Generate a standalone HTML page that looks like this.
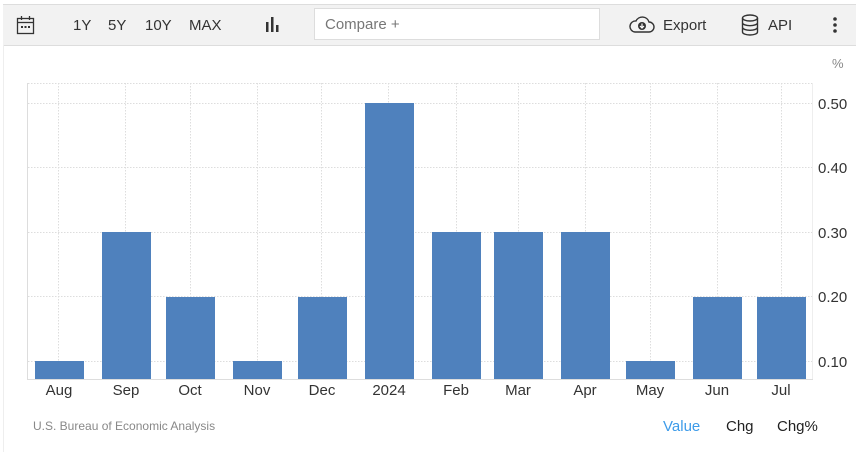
<!DOCTYPE html>
<html><head><style>
body{margin:0;width:856px;height:452px;background:#fff;font-family:"Liberation Sans",Arial,sans-serif;overflow:hidden;position:relative}
.tb{position:absolute;left:3px;top:4px;width:853px;height:40px;background:#f2f2f2;border-top:1px solid #ddd;border-bottom:1px solid #ddd}
.t{position:absolute;font-size:15px;color:#333;top:17px}
.cmp{position:absolute;left:314px;top:8px;width:286px;height:32px;background:#fff;border:1px solid #ddd;box-sizing:border-box;font-size:15px;color:#777;padding:7px 10px}
.lb{position:absolute;left:3px;top:45px;width:1px;height:407px;background:#eee}
</style></head><body>
<div class="tb"></div><div class="lb"></div>
<svg style="position:absolute;left:16px;top:15px" width="20" height="21" viewBox="0 0 20 21"><rect x="1.5" y="3.5" width="16" height="15" fill="none" stroke="#333" stroke-width="1.3"/><line x1="1.5" y1="7.5" x2="17.5" y2="7.5" stroke="#333" stroke-width="1.3"/><line x1="5.5" y1="1" x2="5.5" y2="5" stroke="#333" stroke-width="1.3"/><line x1="13.5" y1="1" x2="13.5" y2="5" stroke="#333" stroke-width="1.3"/><rect x="5" y="11" width="2" height="2" fill="#333"/><rect x="8.5" y="11" width="2" height="2" fill="#333"/><rect x="12" y="11" width="2" height="2" fill="#333"/></svg>
<div class="t" style="left:73px">1Y</div><div class="t" style="left:108px">5Y</div><div class="t" style="left:145px">10Y</div><div class="t" style="left:189px">MAX</div>
<svg style="position:absolute;left:264px;top:16px" width="16" height="16"><rect x="2" y="6" width="2.5" height="10" fill="#333"/><rect x="7" y="1" width="2.5" height="15" fill="#333"/><rect x="12" y="9" width="2.5" height="7" fill="#333"/></svg>
<div class="cmp">Compare +</div>
<svg style="position:absolute;left:629px;top:15px" width="26" height="20" viewBox="0 0 26 20"><path d="M6 17 H20 A5 5 0 0 0 20 7 A7 7 0 0 0 7 6 A5.5 5.5 0 0 0 6 17Z" fill="none" stroke="#333" stroke-width="1.4"/><circle cx="13" cy="11" r="4" fill="#333"/><path d="M13 8.5v4M11 11l2 2 2-2" stroke="#fff" stroke-width="1.2" fill="none"/></svg>
<div class="t" style="left:663px">Export</div>
<svg style="position:absolute;left:741px;top:14px" width="18" height="22" viewBox="0 0 18 22"><ellipse cx="9" cy="4" rx="7.5" ry="3" fill="none" stroke="#333" stroke-width="1.4"/><path d="M1.5 4v14c0 1.7 3.4 3 7.5 3s7.5-1.3 7.5-3V4M1.5 8.7c0 1.7 3.4 3 7.5 3s7.5-1.3 7.5-3M1.5 13.3c0 1.7 3.4 3 7.5 3s7.5-1.3 7.5-3" fill="none" stroke="#333" stroke-width="1.4"/></svg>
<div class="t" style="left:768px">API</div>
<svg style="position:absolute;left:832px;top:16px" width="6" height="18"><circle cx="3" cy="3" r="1.8" fill="#333"/><circle cx="3" cy="9" r="1.8" fill="#333"/><circle cx="3" cy="15" r="1.8" fill="#333"/></svg>
<svg style="position:absolute;left:0;top:0" width="856" height="452" font-family="Liberation Sans, Arial, sans-serif">
<g stroke="#ddd" stroke-dasharray="1.5,1.5" stroke-width="1">
<line x1="28" y1="83.5" x2="813" y2="83.5"/><line x1="28" y1="103.5" x2="813" y2="103.5"/><line x1="28" y1="167.5" x2="813" y2="167.5"/><line x1="28" y1="232.5" x2="813" y2="232.5"/><line x1="28" y1="296.5" x2="813" y2="296.5"/><line x1="28" y1="361.5" x2="813" y2="361.5"/>
<line x1="58.5" y1="83" x2="58.5" y2="379"/><line x1="125.5" y1="83" x2="125.5" y2="379"/><line x1="190.5" y1="83" x2="190.5" y2="379"/><line x1="257.5" y1="83" x2="257.5" y2="379"/><line x1="321.5" y1="83" x2="321.5" y2="379"/><line x1="388.5" y1="83" x2="388.5" y2="379"/><line x1="456.5" y1="83" x2="456.5" y2="379"/><line x1="518.5" y1="83" x2="518.5" y2="379"/><line x1="585.5" y1="83" x2="585.5" y2="379"/><line x1="650.5" y1="83" x2="650.5" y2="379"/><line x1="717.5" y1="83" x2="717.5" y2="379"/><line x1="781.5" y1="83" x2="781.5" y2="379"/>
</g>
<line x1="27.5" y1="83" x2="27.5" y2="379" stroke="#ddd"/>
<line x1="27" y1="379.5" x2="813" y2="379.5" stroke="#ddd"/>
<line x1="812.5" y1="83" x2="812.5" y2="379" stroke="#eee"/>
<g fill="#4f81bd">
<rect x="35" y="361" width="49" height="18"/><rect x="102" y="232" width="49" height="147"/><rect x="166" y="297" width="49" height="82"/><rect x="233" y="361" width="49" height="18"/><rect x="298" y="297" width="49" height="82"/><rect x="365" y="103" width="49" height="276"/><rect x="432" y="232" width="49" height="147"/><rect x="494" y="232" width="49" height="147"/><rect x="561" y="232" width="49" height="147"/><rect x="626" y="361" width="49" height="18"/><rect x="693" y="297" width="49" height="82"/><rect x="757" y="297" width="49" height="82"/>
</g>
<g font-size="15" fill="#333" text-anchor="middle">
<text x="59" y="395">Aug</text><text x="126" y="395">Sep</text><text x="190" y="395">Oct</text><text x="257" y="395">Nov</text><text x="322" y="395">Dec</text><text x="389" y="395">2024</text><text x="456" y="395">Feb</text><text x="518" y="395">Mar</text><text x="585" y="395">Apr</text><text x="650" y="395">May</text><text x="717" y="395">Jun</text><text x="781" y="395">Jul</text>
</g>
<g font-size="15" fill="#333">
<text x="818" y="109">0.50</text><text x="818" y="173">0.40</text><text x="818" y="238">0.30</text><text x="818" y="302">0.20</text><text x="818" y="367">0.10</text>
</g>
<text x="832" y="68" font-size="13" fill="#888">%</text>
<text x="33" y="430" font-size="12" fill="#888">U.S. Bureau of Economic Analysis</text>
<text x="663" y="431" font-size="15" fill="#3d9be9">Value</text>
<text x="726" y="431" font-size="15" fill="#222">Chg</text>
<text x="777" y="431" font-size="15" fill="#222">Chg%</text>
</svg>
</body></html>
